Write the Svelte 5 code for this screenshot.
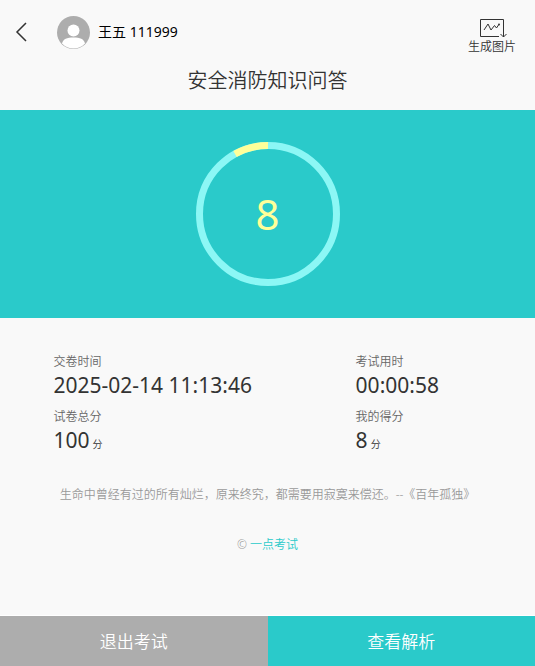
<script>
  let user = { name: "王五", number: "111999" };
  let title = "安全消防知识问答";
  let score = 8;
  let total = 100;

  let details = [
    { label: "交卷时间", value: "2025-02-14 11:13:46" },
    { label: "考试用时", value: "00:00:58" },
    { label: "试卷总分", value: total, unit: "分" },
    { label: "我的得分", value: score, unit: "分" },
  ];
</script>

<div class="page">
  <header>
    <div class="bar">
      <button class="back" type="button" aria-label="返回">
        <svg width="12" height="20" viewBox="0 0 12 20">
          <path d="M11 1 L2 10 L11 19" />
        </svg>
      </button>
      <svg class="avatar" width="33" height="33" viewBox="0 0 33 33">
        <defs>
          <clipPath id="face"><circle cx="16.5" cy="16.5" r="16" /></clipPath>
        </defs>
        <circle cx="16.5" cy="16.5" r="16.5" fill="#adadad" />
        <g clip-path="url(#face)" fill="#fff">
          <circle cx="16.5" cy="14.5" r="6" />
          <path d="M5 33 V27.5 C6 23 10 21.5 16.5 21.5 C23 21.5 27 23 28 27.5 V33 Z" />
        </g>
      </svg>
      <span class="name">{user.name} {user.number}</span>
      <button class="share" type="button">
        <svg width="30" height="20" viewBox="0 0 30 20">
          <path d="M22 18.5 H3.5 V1.5 H26.5 V10" />
          <path d="M7 12 L11 6 L14 12 L17.5 7.5 L19.5 10 L21.5 7" />
          <path d="M26.5 9 V19 M23.5 16 L26.5 19 L29.5 16" />
          <circle cx="22" cy="6.5" r="1" />
        </svg>
        生成图片
      </button>
    </div>
    <h1>{title}</h1>
  </header>

  <section class="result">
    <svg class="ring" width="144" height="144" viewBox="0 0 144 144">
      <circle class="track" cx="72" cy="72" r="68.5" />
      <circle
        class="arc"
        cx="72"
        cy="72"
        r="68.5"
        pathLength="100"
        stroke-dasharray="{(score / total) * 100} 100"
        transform="matrix(0 -1 -1 0 144 144)"
      />
    </svg>
    <span class="score">{score}</span>
  </section>

  <dl>
    {#each details as { label, value, unit }}
      <div>
        <dt>{label}</dt>
        <dd>{value}{#if unit}<small>{unit}</small>{/if}</dd>
      </div>
    {/each}
  </dl>

  <p class="quote">
    生命中曾经有过的所有灿烂，原来终究，都需要用寂寞来偿还。--《百年孤独》
  </p>
  <p class="copyright">© <a href="#home">一点考试</a></p>

  <footer>
    <button class="quit" type="button">退出考试</button>
    <button class="review" type="button">查看解析</button>
  </footer>
</div>

<style>
  :global(body) {
    margin: 0;
    background: #f9f9f9;
  }
  .page {
    display: flex;
    flex-direction: column;
    min-height: 100vh;
    color: #333;
    font-family: "Noto Sans", "Noto Sans CJK SC", sans-serif;
    font-size: 12px;
    font-weight: 350;
    line-height: 18px;
  }
  button {
    margin: 0;
    padding: 0;
    border: 0;
    background: none;
    color: inherit;
    font: inherit;
    cursor: pointer;
  }

  .bar {
    display: flex;
    align-items: center;
    height: 64px;
    padding: 0 19px 0 15px;
  }
  .back {
    display: flex;
    width: 42px;
  }
  .back path,
  .share path {
    fill: none;
    stroke: #333;
  }
  .back path {
    stroke-width: 1.5;
  }
  .name {
    margin-left: 8px;
    color: #000;
    font-size: 14px;
    font-weight: 400;
  }
  .share {
    display: flex;
    flex-direction: column;
    align-items: center;
    margin-left: auto;
    padding-top: 10px;
  }
  .share circle {
    fill: #333;
  }
  h1 {
    margin: 0;
    padding: 1px 0 13px;
    font-size: 20px;
    font-weight: inherit;
    line-height: 32px;
    text-align: center;
  }

  .result {
    display: grid;
    place-items: center;
    padding: 32px 0;
    background: #2acaca;
  }
  .ring,
  .score {
    grid-area: 1 / 1;
  }
  .ring circle {
    fill: none;
    stroke-width: 7;
  }
  .ring .track {
    stroke: #8cf7f5;
  }
  .ring .arc {
    stroke: #ffff99;
  }
  .score {
    color: #ffff99;
    font-size: 42px;
    font-weight: 400;
    line-height: 60px;
  }

  dl {
    display: grid;
    grid-template-columns: 12fr 5fr;
    row-gap: 9px;
    margin: 0;
    padding: 35px 10% 0;
  }
  dt {
    color: #666;
  }
  dd {
    margin: 0;
    font-size: 21px;
    font-weight: 400;
    line-height: 28px;
    white-space: nowrap;
  }
  small {
    margin-left: 3px;
    font-size: 10px;
    font-weight: 350;
  }

  p {
    margin: 0;
    color: #999;
    text-align: center;
  }
  .quote {
    margin-top: 28px;
  }
  .copyright {
    margin: 32px 0;
  }
  a {
    color: #2acaca;
    text-decoration: none;
  }

  footer {
    display: flex;
    margin-top: auto;
    border-top: 1px solid #fff;
  }
  footer button {
    flex: 1;
    height: 50px;
    padding-top: 2px;
    color: #fff;
    font-size: 17px;
  }
  .quit {
    background: #adadad;
  }
  .review {
    background: #2acaca;
  }
</style>
